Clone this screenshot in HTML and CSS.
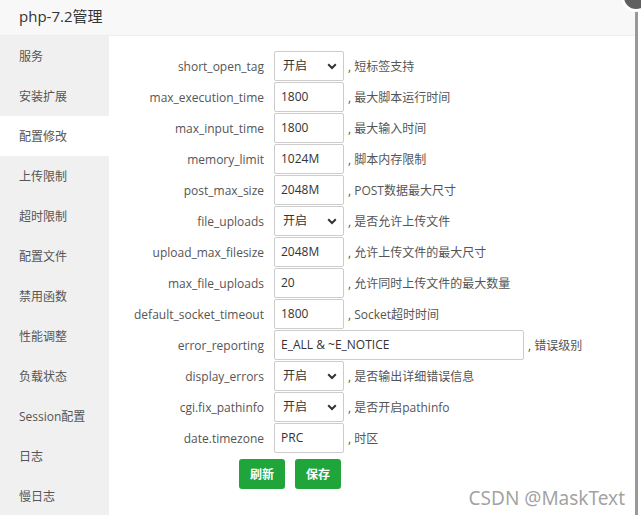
FILE: index.html
```html
<!DOCTYPE html>
<html lang="zh-CN">
<head>
  <meta charset="utf-8" />
  <meta name="viewport" content="width=device-width,initial-scale=1" />
  <title>php-7.2管理</title>
  <link rel="stylesheet" href="styles.css">
</head>
<body>
  <div class="layer">
    <div class="layer-title">php-7.2管理</div>
    <div class="layer-body">
      <ul class="side-menu">
        <li>服务</li>
        <li>安装扩展</li>
        <li class="active">配置修改</li>
        <li>上传限制</li>
        <li>超时限制</li>
        <li>配置文件</li>
        <li>禁用函数</li>
        <li>性能调整</li>
        <li>负载状态</li>
        <li>Session配置</li>
        <li>日志</li>
        <li>慢日志</li>
      </ul>

      <div class="conf-form">
        <div class="line">
          <span class="tname">short_open_tag</span>
          <div class="select"><span>开启</span>
            <svg width="10" height="7" viewBox="0 0 10 7"><path d="M1.2 1.3 L5 5 L8.8 1.3" fill="none" stroke="#333" stroke-width="2"/></svg>
          </div>
          <span class="tips">, 短标签支持</span>
        </div>
        <div class="line">
          <span class="tname">max_execution_time</span>
          <div class="input">1800</div>
          <span class="tips">, 最大脚本运行时间</span>
        </div>
        <div class="line">
          <span class="tname">max_input_time</span>
          <div class="input">1800</div>
          <span class="tips">, 最大输入时间</span>
        </div>
        <div class="line">
          <span class="tname">memory_limit</span>
          <div class="input">1024M</div>
          <span class="tips">, 脚本内存限制</span>
        </div>
        <div class="line">
          <span class="tname">post_max_size</span>
          <div class="input">2048M</div>
          <span class="tips">, POST数据最大尺寸</span>
        </div>
        <div class="line">
          <span class="tname">file_uploads</span>
          <div class="select"><span>开启</span>
            <svg width="10" height="7" viewBox="0 0 10 7"><path d="M1.2 1.3 L5 5 L8.8 1.3" fill="none" stroke="#333" stroke-width="2"/></svg>
          </div>
          <span class="tips">, 是否允许上传文件</span>
        </div>
        <div class="line">
          <span class="tname">upload_max_filesize</span>
          <div class="input">2048M</div>
          <span class="tips">, 允许上传文件的最大尺寸</span>
        </div>
        <div class="line">
          <span class="tname">max_file_uploads</span>
          <div class="input">20</div>
          <span class="tips">, 允许同时上传文件的最大数量</span>
        </div>
        <div class="line">
          <span class="tname">default_socket_timeout</span>
          <div class="input">1800</div>
          <span class="tips">, Socket超时时间</span>
        </div>
        <div class="line">
          <span class="tname">error_reporting</span>
          <div class="input wide">E_ALL &amp; ~E_NOTICE</div>
          <span class="tips">, 错误级别</span>
        </div>
        <div class="line">
          <span class="tname">display_errors</span>
          <div class="select"><span>开启</span>
            <svg width="10" height="7" viewBox="0 0 10 7"><path d="M1.2 1.3 L5 5 L8.8 1.3" fill="none" stroke="#333" stroke-width="2"/></svg>
          </div>
          <span class="tips">, 是否输出详细错误信息</span>
        </div>
        <div class="line">
          <span class="tname">cgi.fix_pathinfo</span>
          <div class="select"><span>开启</span>
            <svg width="10" height="7" viewBox="0 0 10 7"><path d="M1.2 1.3 L5 5 L8.8 1.3" fill="none" stroke="#333" stroke-width="2"/></svg>
          </div>
          <span class="tips">, 是否开启pathinfo</span>
        </div>
        <div class="line">
          <span class="tname">date.timezone</span>
          <div class="input">PRC</div>
          <span class="tips">, 时区</span>
        </div>
        <div class="btns">
          <button class="btn-success">刷新</button>
          <button class="btn-success">保存</button>
        </div>
      </div>
    </div>
    <span class="layer-close"></span>
  </div>
  <div class="watermark">CSDN @MaskText</div>
</body>
</html>
```

FILE: styles.css
```css
html,body{height:100%}
body{
  margin:0; overflow:hidden; background:#fff;
  font-family:"Open Sans","Noto Sans CJK SC",sans-serif;
  font-size:12px; color:#555;
}

.layer{
  position:relative;
  width:638px; height:100vh;
  border-right:3px solid #999;
  box-sizing:border-box;
  display:flex; flex-direction:column;
}
.layer-title{
  height:35px; line-height:32px;
  padding-left:19px;
  background:#f8f8f8; border-bottom:1px solid #eee;
  font-size:15px; color:#333;
}
.layer-close{
  position:absolute; right:-16px; top:-18px;
  width:24px; height:24px; border-radius:50%;
  background:#5f5f5f; border:3px solid #fff;
}

.layer-body{ flex:1; display:flex; min-height:0; }

.side-menu{
  list-style:none; margin:0; padding:0;
  width:109px; background:#f0f0f0;
  overflow:hidden;
}
.side-menu li{
  height:40px; line-height:42px;
  padding-left:19px; font-size:12px; color:#555;
}
.side-menu li.active{ background:#fff; }

.conf-form{
  flex:1; padding-top:15px;
  display:flex; flex-direction:column; gap:1px;
}
.line{ display:flex; align-items:center; height:30px; }
.tname{
  width:165px; text-align:right;
  padding-right:10px; box-sizing:border-box;
}
.input,.select{
  width:70px; height:30px; box-sizing:border-box;
  border:1px solid #ccc; border-radius:2px;
  color:#333; font-size:12px; line-height:28px;
}
.input{ padding-left:6px; }
.input.wide{ width:250px; }
.select{
  display:flex; align-items:center; justify-content:space-between;
  padding:0 6px 0 8px;
}
.tips{ margin-left:4px; }

.btns{ display:flex; gap:10px; padding-left:130px; margin-top:5px; }
.btn-success{
  width:46px; height:30px;
  background:#20a53a; color:#fff;
  border:0; border-radius:3px;
  font-family:inherit; font-size:12px; font-weight:bold;
}

.watermark{
  position:absolute; right:16px; bottom:4px;
  font-family:"Noto Sans",sans-serif; font-size:19px;
  color:rgba(120,120,120,0.7);
}
```
